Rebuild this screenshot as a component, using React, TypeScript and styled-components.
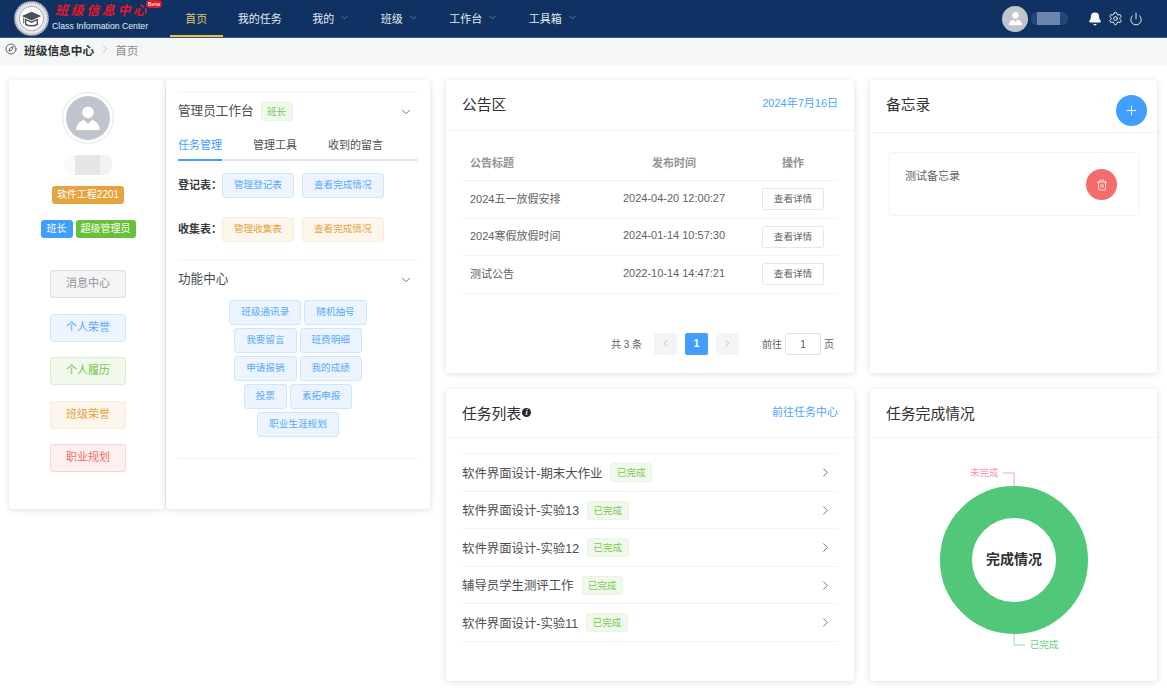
import React from 'react'
import styled, { createGlobalStyle } from 'styled-components'
import { Bell, ChevronDown, ChevronLeft, ChevronRight, Compass, Plus, Power, Settings, Trash2 } from 'lucide-react'

type Tone = 'gray' | 'blue' | 'green' | 'orange' | 'red'

const tones: Record<Tone, { bg: string; line: string; text: string }> = {
  gray: { bg: '#f4f4f5', line: '#dcdee2', text: '#909399' },
  blue: { bg: '#ecf5ff', line: '#cfe5ff', text: '#59a8fb' },
  green: { bg: '#f0f9eb', line: '#d9f0cd', text: '#74c64c' },
  orange: { bg: '#fdf6ec', line: '#faecd8', text: '#e6a23c' },
  red: { bg: '#fef0f0', line: '#fcd3d3', text: '#f56c6c' },
}

const GlobalStyle = createGlobalStyle`
  html, body {
    margin: 0;
    background: #fff;
    color: #303133;
    font-family: "Liberation Sans", "Noto Sans CJK SC", sans-serif;
    overflow: hidden;
  }
  * { box-sizing: border-box; }
`

const Page = styled.div`
  width: 1167px;
  height: 690px;
  overflow: hidden;
`

const Header = styled.header`
  height: 38px;
  background: #0f3263;
  border-bottom: 1px solid #3d5c88;
  display: flex;
  align-items: stretch;
  color: #fff;
`

const Logo = styled.div`
  position: relative;
  width: 170px;
  flex: none;
  display: flex;
  align-items: center;
  padding: 0 0 1px 14px;
`

const LogoText = styled.div`
  margin-left: 3px;
  display: flex;
  flex-direction: column;
`

const LogoName = styled.span`
  font-family: "Liberation Serif", "Noto Sans CJK SC", serif;
  font-size: 13px;
  font-weight: 700;
  font-style: italic;
  letter-spacing: 2.6px;
  line-height: 13px;
  color: #e8162a;
  padding-left: 3px;
`

const LogoSub = styled.span`
  margin-top: 4px;
  font-size: 8.7px;
  line-height: 11px;
  color: #e8edf4;
  white-space: nowrap;
`

const Beta = styled.span`
  position: absolute;
  left: 146px;
  top: 0;
  width: 16px;
  height: 8px;
  border-radius: 4px;
  background: #d91c24;
  color: #fff;
  font-size: 6px;
  line-height: 8px;
  text-align: center;
`

const Nav = styled.nav`
  display: flex;
  flex: 1;
`

const NavItem = styled.div<{ $active?: boolean }>`
  display: flex;
  align-items: center;
  padding: 0 15.25px;
  height: 37px;
  font-size: 11px;
  color: ${(p) => (p.$active ? '#e3c766' : '#e6ebf2')};
  border-bottom: 2px solid ${(p) => (p.$active ? '#e8c33f' : 'transparent')};
  svg {
    margin-left: 5px;
    color: #7f94b3;
  }
`

const HeaderRight = styled.div`
  display: flex;
  align-items: center;
  padding-right: 24px;
`

const HeaderAvatar = styled.div`
  width: 26px;
  height: 26px;
  border-radius: 50%;
  background: #c0c4cc;
  display: flex;
  align-items: center;
  justify-content: center;
`

const HeaderName = styled.div`
  width: 37px;
  height: 13px;
  margin: 0 20px 0 3px;
  border-radius: 6px;
  background: linear-gradient(90deg, #23467a 0 16%, #6c85ab 16% 78%, #23467a 78% 100%);
`

const HeaderIcons = styled.div`
  display: flex;
  align-items: center;
  gap: 6px;
`

const Crumbs = styled.div`
  height: 27px;
  background: #f5f7f7;
  display: flex;
  align-items: center;
  padding: 0 0 5px 5px;
  font-size: 11.7px;
  color: #8a8a8a;
  svg { flex: none; }
`

const CrumbRoot = styled.b`
  margin-left: 7px;
  color: #303133;
`

const CrumbSep = styled.span`
  display: flex;
  margin: 0 4px 0 5px;
  color: #a8abb0;
`

const Main = styled.main`
  display: grid;
  grid-template-columns: 421px 408px 287px;
  grid-template-rows: 293px 292px;
  gap: 16px;
  padding: 15px 0 0 9px;
`

const LeftColumn = styled.section`
  grid-row: 1 / span 2;
  display: flex;
  align-items: flex-start;
  height: 429px;
`

const Panel = styled.div`
  background: #fff;
  height: 429px;
  border-radius: 3px;
  box-shadow: 0 1px 7px rgba(0, 0, 0, 0.13);
`

const Profile = styled(Panel)`
  width: 156px;
  flex: none;
  display: flex;
  flex-direction: column;
  align-items: center;
  padding: 12px 0 0 2px;
`

const AvatarRing = styled.div`
  width: 52px;
  height: 52px;
  border-radius: 50%;
  border: 1px solid #e6e6e6;
  display: flex;
  align-items: center;
  justify-content: center;
`

const AvatarDisc = styled(HeaderAvatar)`
  width: 44px;
  height: 44px;
`

const BlurName = styled.div`
  width: 48px;
  height: 20px;
  margin-top: 11px;
  border-radius: 8px;
  background: linear-gradient(90deg, #fafafa 0 22%, #e6e6e6 22% 75%, #f3f3f3 75% 100%);
`

const SolidTag = styled.span<{ $color: string }>`
  display: inline-block;
  height: 18px;
  min-width: 32px;
  padding: 0 5px;
  border-radius: 3px;
  background: ${(p) => p.$color};
  color: #fff;
  font-size: 10px;
  line-height: 18px;
  text-align: center;
  white-space: nowrap;
`

const ClassRow = styled.div`
  margin-top: 11px;
  display: flex;
`

const RoleRow = styled.div`
  margin-top: 16px;
  display: flex;
  gap: 3px;
`

const SideButtons = styled.div`
  margin-top: 32px;
  display: flex;
  flex-direction: column;
  gap: 15.5px;
`

const SideButton = styled.div<{ $tone: Tone }>`
  width: 76px;
  height: 28px;
  border-radius: 3px;
  border: 1px solid ${(p) => tones[p.$tone].line};
  background: ${(p) => tones[p.$tone].bg};
  color: ${(p) => tones[p.$tone].text};
  font-size: 11px;
  line-height: 25px;
  text-align: center;
`

const Admin = styled(Panel)`
  flex: 1;
  margin-left: 1px;
  padding: 12px 12px 0;
`

const FoldHead = styled.div`
  height: 37px;
  border-top: 1px solid #f4f5f9;
  display: flex;
  align-items: center;
  font-size: 12.6px;
  line-height: 1;
  padding-top: 1px;
  color: #4a4d52;
  svg {
    margin-left: auto;
    margin-right: 5px;
    color: #606266;
  }
`

const LightTag = styled.span`
  display: inline-block;
  height: 19px;
  padding: 0 5.5px;
  border-radius: 3px;
  border: 1px solid #e6f5de;
  background: #f0f9eb;
  color: #79c854;
  font-size: 9.5px;
  line-height: 17px;
  white-space: nowrap;
`

const HeadTag = styled(LightTag)`
  margin-left: 7px;
  width: 32px;
  text-align: center;
  padding: 0;
`

const Tabs = styled.div`
  height: 32px;
  display: flex;
  gap: 31px;
  border-bottom: 2px solid #e4e7ed;
`

const Tab = styled.div<{ $active?: boolean }>`
  height: 32px;
  font-size: 11px;
  line-height: 32px;
  color: ${(p) => (p.$active ? '#409eff' : '#4c4f55')};
  border-bottom: 2px solid ${(p) => (p.$active ? '#409eff' : 'transparent')};
`

const FormRow = styled.div<{ $gap: number }>`
  margin-top: ${(p) => p.$gap}px;
  display: flex;
  align-items: center;
`

const FormLabel = styled.b`
  width: 44px;
  margin-bottom: 4px;
  font-size: 11px;
  color: #3a3c40;
`

const SmallButton = styled.div<{ $tone: Tone }>`
  height: 25px;
  padding: 0 11px;
  border-radius: 3px;
  border: 1px solid ${(p) => tones[p.$tone].line};
  background: ${(p) => tones[p.$tone].bg};
  color: ${(p) => tones[p.$tone].text};
  font-size: 9.6px;
  line-height: 22px;
  white-space: nowrap;
`

const FormButtons = styled.div`
  display: flex;
  gap: 8px;
`

const Section = styled.div`
  margin-top: 18px;
`

const ToolRows = styled.div`
  margin-top: 3px;
  display: flex;
  flex-direction: column;
  gap: 3px;
  padding-bottom: 21px;
  border-bottom: 1px solid #eef0f4;
`

const ToolRow = styled.div`
  display: flex;
  justify-content: center;
  gap: 3px;
`

const Card = styled.div`
  background: #fff;
  border-radius: 3px;
  box-shadow: 0 1px 7px rgba(0, 0, 0, 0.13);
  display: flex;
  flex-direction: column;
  min-height: 0;
`

const CardHead = styled.div<{ $h: number; $lift?: number }>`
  position: relative;
  height: ${(p) => p.$h}px;
  flex: none;
  border-bottom: 1px solid #f1f3f7;
  display: flex;
  align-items: center;
  justify-content: space-between;
  padding: 0 16px ${(p) => p.$lift ?? 0}px;
`

const CardTitle = styled.div`
  display: flex;
  align-items: center;
  font-size: 14.8px;
  color: #303133;
`

const InfoDot = styled.span`
  width: 9px;
  height: 9px;
  margin-left: 1px;
  border-radius: 50%;
  background: #25272b;
  color: #fff;
  font-family: "Liberation Serif", serif;
  font-style: italic;
  font-weight: 700;
  font-size: 8px;
  line-height: 9px;
  text-align: center;
`

const HeadLink = styled.span`
  margin-top: -2px;
  font-size: 11px;
  color: #4ea5fd;
`

const Table = styled.div`
  margin: 13px 16px 0;
  font-size: 11px;
  color: #606266;
`

const TableRow = styled.div<{ $head?: boolean }>`
  height: ${(p) => (p.$head ? 37 : 37.5)}px;
  padding-bottom: ${(p) => (p.$head ? 0 : 2)}px;
  display: grid;
  grid-template-columns: 138px 148px 90px;
  align-items: center;
  border-bottom: 1px solid #f0f2f6;
  font-weight: ${(p) => (p.$head ? 700 : 400)};
  color: ${(p) => (p.$head ? '#909399' : '#606266')};
`

const TitleCell = styled.div`
  padding: 0 0 1px 8px;
`

const MidCell = styled.div`
  padding-bottom: 1px;
  text-align: center;
  white-space: nowrap;
`

const DetailButton = styled.div`
  width: 62px;
  height: 22px;
  margin: 2px auto 0;
  border: 1px solid #e4e7ed;
  border-radius: 2px;
  font-size: 9.6px;
  font-weight: 400;
  line-height: 20px;
  text-align: center;
  color: #5f6266;
`

const Pager = styled.div`
  margin-top: 39px;
  padding-right: 20px;
  display: flex;
  align-items: center;
  justify-content: flex-end;
  font-size: 10px;
  color: #606266;
`

const PageTotal = styled.span`
  margin-right: 12px;
`

const PageBox = styled.div<{ $active?: boolean }>`
  width: 23px;
  height: 22px;
  margin-right: 8px;
  border-radius: 2px;
  display: flex;
  align-items: center;
  justify-content: center;
  font-weight: 700;
  background: ${(p) => (p.$active ? '#409eff' : '#f4f4f5')};
  color: ${(p) => (p.$active ? '#fff' : '#b5b8be')};
`

const PageJump = styled.span`
  margin-left: 15px;
`

const PageInput = styled.div`
  width: 36px;
  height: 22px;
  margin: 0 3px;
  border: 1px solid #dcdfe6;
  border-radius: 3px;
  font-size: 11px;
  line-height: 20px;
  text-align: center;
`

const TaskList = styled.div`
  margin: 15px 16px 0;
  border-top: 1px solid #f0f2f6;
`

const TaskRow = styled.div`
  height: 37.5px;
  padding-top: 1px;
  display: flex;
  align-items: center;
  border-bottom: 1px solid #f0f2f6;
  font-size: 12.4px;
  color: #4b4e53;
  svg {
    margin-left: auto;
    margin-right: 5px;
    color: #606266;
  }
`

const TaskTag = styled(LightTag)`
  margin-left: 8px;
`

const RoundButton = styled.div<{ $color: string }>`
  width: 31px;
  height: 31px;
  flex: none;
  border-radius: 50%;
  background: ${(p) => p.$color};
  color: #fff;
  display: flex;
  align-items: center;
  justify-content: center;
`

const AddButton = styled(RoundButton)`
  position: absolute;
  right: 10px;
  top: 15px;
`

const MemoBox = styled.div`
  margin: 19px 18px 0 19px;
  height: 64px;
  border: 1px solid #f0f2f6;
  border-radius: 3px;
  padding: 16px 21px 0 15px;
  display: flex;
  justify-content: space-between;
  font-size: 11px;
  color: #606266;
`

const MemoText = styled.span`
  margin-top: -2px;
`

const ChartSvg = styled.svg`
  display: block;
  font-family: "Liberation Sans", "Noto Sans CJK SC", sans-serif;
`

const UserGlyph = ({ size }: { size: number }) => (
  <svg width={size} height={size} viewBox="0 0 24 24" fill="#fff">
    <circle cx="12" cy="7.5" r="4.6" />
    <path d="M2.5 21.5c.4-4.6 2.8-7 6.4-8l3.1 3.4 3.1-3.4c3.6 1 6 3.4 6.4 8z" />
  </svg>
)

const LogoSeal = () => (
  <svg width="35" height="35" viewBox="0 0 36 36">
    <circle cx="18" cy="18" r="17.5" fill="#e4e6e8" />
    <circle cx="18" cy="18" r="17" fill="none" stroke="#9aa0a8" strokeWidth="2.4" strokeDasharray="1.2 1" />
    <circle cx="18" cy="18" r="12.5" fill="#fff" stroke="#8f959d" strokeWidth="0.8" />
    <path d="M8 15.5l10-4.5 10 4.5-10 4.5z" fill="#4b5057" />
    <path d="M12 19v5c3 2 9 2 12 0v-5l-6 2.8z" fill="none" stroke="#4b5057" strokeWidth="1.4" />
    <path d="M10 17v6" stroke="#4b5057" strokeWidth="1" />
  </svg>
)

const navItems = [
  { label: '我的任务' },
  { label: '我的', more: true },
  { label: '班级', more: true },
  { label: '工作台', more: true },
  { label: '工具箱', more: true },
]

const sideButtons: { label: string; tone: Tone }[] = [
  { label: '消息中心', tone: 'gray' },
  { label: '个人荣誉', tone: 'blue' },
  { label: '个人履历', tone: 'green' },
  { label: '班级荣誉', tone: 'orange' },
  { label: '职业规划', tone: 'red' },
]

const toolRows = [
  ['班级通讯录', '随机抽号'],
  ['我要留言', '班费明细'],
  ['申请报销', '我的成绩'],
  ['投票', '素拓申报'],
  ['职业生涯规划'],
]

const notices = [
  { title: '2024五一放假安排', time: '2024-04-20 12:00:27' },
  { title: '2024寒假放假时间', time: '2024-01-14 10:57:30' },
  { title: '测试公告', time: '2022-10-14 14:47:21' },
]

const tasks = ['软件界面设计-期末大作业', '软件界面设计-实验13', '软件界面设计-实验12', '辅导员学生测评工作', '软件界面设计-实验11']

const App: React.FC = () => {
  return (
    <Page>
      <GlobalStyle />
      <Header>
        <Logo>
          <LogoSeal />
          <LogoText>
            <LogoName>班级信息中心</LogoName>
            <LogoSub>Class Information Center</LogoSub>
          </LogoText>
          <Beta>Beta</Beta>
        </Logo>
        <Nav>
          <NavItem $active>首页</NavItem>
          {navItems.map((item) => (
            <NavItem key={item.label}>
              {item.label}
              {item.more && <ChevronDown size={11} strokeWidth={1.5} />}
            </NavItem>
          ))}
        </Nav>
        <HeaderRight>
          <HeaderAvatar>
            <UserGlyph size={17} />
          </HeaderAvatar>
          <HeaderName />
          <HeaderIcons>
            <Bell size={14} fill="#fff" color="#fff" />
            <Settings size={15} color="#fff" strokeWidth={1.5} />
            <Power size={14} color="#fff" strokeWidth={1.5} />
          </HeaderIcons>
        </HeaderRight>
      </Header>

      <Crumbs>
        <Compass size={12} color="#303133" strokeWidth={1.5} />
        <CrumbRoot>班级信息中心</CrumbRoot>
        <CrumbSep>
          <ChevronRight size={12} strokeWidth={1.5} />
        </CrumbSep>
        首页
      </Crumbs>

      <Main>
        <LeftColumn>
          <Profile>
            <AvatarRing>
              <AvatarDisc>
                <UserGlyph size={30} />
              </AvatarDisc>
            </AvatarRing>
            <BlurName />
            <ClassRow>
              <SolidTag $color="#e6a23c">软件工程2201</SolidTag>
            </ClassRow>
            <RoleRow>
              <SolidTag $color="#409eff">班长</SolidTag>
              <SolidTag $color="#67c23a">超级管理员</SolidTag>
            </RoleRow>
            <SideButtons>
              {sideButtons.map((b) => (
                <SideButton key={b.label} $tone={b.tone}>
                  {b.label}
                </SideButton>
              ))}
            </SideButtons>
          </Profile>

          <Admin>
            <FoldHead>
              管理员工作台
              <HeadTag>班长</HeadTag>
              <ChevronDown size={14} strokeWidth={1.5} />
            </FoldHead>
            <Tabs>
              <Tab $active>任务管理</Tab>
              <Tab>管理工具</Tab>
              <Tab>收到的留言</Tab>
            </Tabs>
            <FormRow $gap={12}>
              <FormLabel>登记表：</FormLabel>
              <FormButtons>
                <SmallButton $tone="blue">管理登记表</SmallButton>
                <SmallButton $tone="blue">查看完成情况</SmallButton>
              </FormButtons>
            </FormRow>
            <FormRow $gap={19}>
              <FormLabel>收集表：</FormLabel>
              <FormButtons>
                <SmallButton $tone="orange">管理收集表</SmallButton>
                <SmallButton $tone="orange">查看完成情况</SmallButton>
              </FormButtons>
            </FormRow>
            <Section>
              <FoldHead>
                功能中心
                <ChevronDown size={14} strokeWidth={1.5} />
              </FoldHead>
              <ToolRows>
                {toolRows.map((row) => (
                  <ToolRow key={row[0]}>
                    {row.map((label) => (
                      <SmallButton key={label} $tone="blue">
                        {label}
                      </SmallButton>
                    ))}
                  </ToolRow>
                ))}
              </ToolRows>
            </Section>
          </Admin>
        </LeftColumn>

        <Card>
          <CardHead $h={51} $lift={4}>
            <CardTitle>公告区</CardTitle>
            <HeadLink>2024年7月16日</HeadLink>
          </CardHead>
          <Table>
            <TableRow $head>
              <TitleCell>公告标题</TitleCell>
              <MidCell>发布时间</MidCell>
              <MidCell>操作</MidCell>
            </TableRow>
            {notices.map((n) => (
              <TableRow key={n.time}>
                <TitleCell>{n.title}</TitleCell>
                <MidCell>{n.time}</MidCell>
                <DetailButton>查看详情</DetailButton>
              </TableRow>
            ))}
          </Table>
          <Pager>
            <PageTotal>共 3 条</PageTotal>
            <PageBox>
              <ChevronLeft size={11} />
            </PageBox>
            <PageBox $active>1</PageBox>
            <PageBox>
              <ChevronRight size={11} />
            </PageBox>
            <PageJump>前往</PageJump>
            <PageInput>1</PageInput>
            页
          </Pager>
        </Card>

        <Card>
          <CardHead $h={53} $lift={6}>
            <CardTitle>备忘录</CardTitle>
            <AddButton $color="#409eff">
              <Plus size={15} strokeWidth={1.5} />
            </AddButton>
          </CardHead>
          <MemoBox>
            <MemoText>测试备忘录</MemoText>
            <RoundButton $color="#f56c6c">
              <Trash2 size={12} strokeWidth={1.5} />
            </RoundButton>
          </MemoBox>
        </Card>

        <Card>
          <CardHead $h={49} $lift={2}>
            <CardTitle>
              任务列表
              <InfoDot>i</InfoDot>
            </CardTitle>
            <HeadLink>前往任务中心</HeadLink>
          </CardHead>
          <TaskList>
            {tasks.map((t) => (
              <TaskRow key={t}>
                {t}
                <TaskTag>已完成</TaskTag>
                <ChevronRight size={15} strokeWidth={1.4} />
              </TaskRow>
            ))}
          </TaskList>
        </Card>

        <Card>
          <CardHead $h={49} $lift={2}>
            <CardTitle>任务完成情况</CardTitle>
          </CardHead>
          <ChartSvg width="287" height="243" viewBox="0 0 287 243">
            <circle cx="144" cy="122" r="58" fill="none" stroke="#50c878" strokeWidth="32" />
            <path d="M133 35h11v13" fill="none" stroke="#ff9db5" strokeWidth="1" />
            <path d="M144 196v11h11" fill="none" stroke="#8ce0aa" strokeWidth="1" />
            <text x="100" y="38" fontSize="9.5" fill="#ff8fab">未完成</text>
            <text x="160" y="210" fontSize="9.5" fill="#63d08a">已完成</text>
            <text x="144" y="126" fontSize="14" fontWeight="700" fill="#303133" textAnchor="middle">完成情况</text>
          </ChartSvg>
        </Card>
      </Main>
    </Page>
  )
}

export default App
